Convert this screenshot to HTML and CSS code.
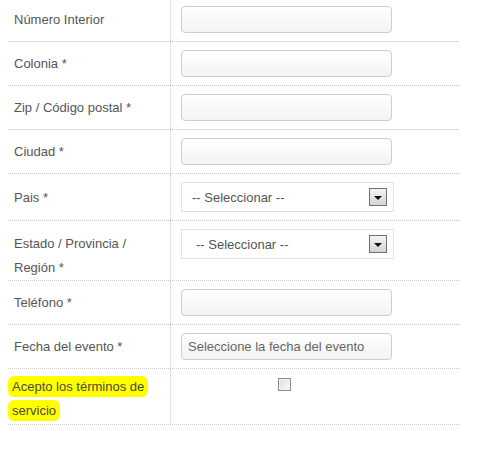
FILE: index.html
```html
<!DOCTYPE html>
<html lang="es">
<head>
<meta charset="utf-8">
<title>Formulario</title>
<link rel="stylesheet" href="styles.css">
</head>
<body>
<div class="form">
  <div class="row">
    <div class="label">Número Interior</div>
    <div class="field"><div class="input"></div></div>
  </div>
  <div class="row">
    <div class="label">Colonia *</div>
    <div class="field"><div class="input"></div></div>
  </div>
  <div class="row">
    <div class="label">Zip / Código postal *</div>
    <div class="field"><div class="input"></div></div>
  </div>
  <div class="row">
    <div class="label">Ciudad *</div>
    <div class="field"><div class="input"></div></div>
  </div>
  <div class="row">
    <div class="label">Pais *</div>
    <div class="field"><div class="select"><span class="select-text">-- Seleccionar --</span><span class="arrow"><span class="tri"></span></span></div></div>
  </div>
  <div class="row row-tall">
    <div class="label label-multi">Estado / Provincia /<br>Región *</div>
    <div class="field field-top"><div class="select select-indent"><span class="select-text">-- Seleccionar --</span><span class="arrow"><span class="tri"></span></span></div></div>
  </div>
  <div class="row">
    <div class="label">Teléfono *</div>
    <div class="field"><div class="input"></div></div>
  </div>
  <div class="row">
    <div class="label">Fecha del evento *</div>
    <div class="field"><div class="input"><span class="placeholder">Seleccione la fecha del evento</span></div></div>
  </div>
  <div class="row row-terms">
    <div class="label label-terms"><span class="mark">Acepto los términos de</span><br><span class="mark">servicio</span></div>
    <div class="field field-top"><span class="checkbox"></span></div>
  </div>
</div>
</body>
</html>
```
FILE: styles.css
```css
* { box-sizing: border-box; }
html, body { margin: 0; padding: 0; background: #fff; }
body {
  font-family: "Liberation Sans", Arial, sans-serif;
  font-size: 13px;
  color: #555;
}
.form {
  margin: -2px 0 0 8px;
  width: 451px;
}
.row {
  display: grid;
  grid-template-columns: 163px 1fr;
  border-bottom: 1px dotted #c8c8c8;
}
.label {
  border-right: 1px dotted #c8c8c8;
  padding: 1px 6px 0;
  line-height: 24px;
  display: flex;
  align-items: center;
}
.label-multi {
  display: block;
  padding-top: 11px;
  padding-bottom: 0;
}
.label-terms {
  display: block;
  padding-top: 6px;
  padding-bottom: 1px;
  color: #4a4a3a;
}
.field {
  padding: 8px 0 8px 10px;
}
.field-top { padding-top: 8px; }
.input {
  width: 211px;
  height: 27px;
  border: 1px solid #cdcdcd;
  border-radius: 4px;
  background: linear-gradient(#ffffff, #f3f3f3);
  display: flex;
  align-items: center;
  padding-left: 6px;
}
.placeholder {
  color: #666;
  font-size: 13px;
}
.select {
  width: 213px;
  height: 30px;
  border: 1px solid #e2e2e2;
  background: #fff;
  display: flex;
  align-items: center;
  justify-content: space-between;
  padding: 0 6px 0 10px;
}
.select-indent { padding-left: 14px; }
.select-text { color: #555; }
.arrow {
  width: 18px;
  height: 18px;
  border: 1px solid #707070;
  background: linear-gradient(#f4f4f4, #d4d4d4);
  display: flex;
  align-items: center;
  justify-content: center;
}
.tri {
  width: 0;
  height: 0;
  border-left: 4px solid transparent;
  border-right: 4px solid transparent;
  border-top: 4px solid #111;
  margin-top: 2px;
}
.row-terms .field { padding-left: 107px; padding-top: 9px; }
.checkbox {
  display: block;
  width: 13px;
  height: 13px;
  border: 1px solid #8a8a8a;
  background: linear-gradient(135deg, #dcdcdc, #fbfbfb);
  box-shadow: inset 0 0 0 1px #f4f4f4;
}
.mark {
  background: #ffff00;
  padding: 3px 4px 3px 4px;
  margin-left: -6px;
  border-radius: 6px;
  -webkit-box-decoration-break: clone;
  box-decoration-break: clone;
}
```
